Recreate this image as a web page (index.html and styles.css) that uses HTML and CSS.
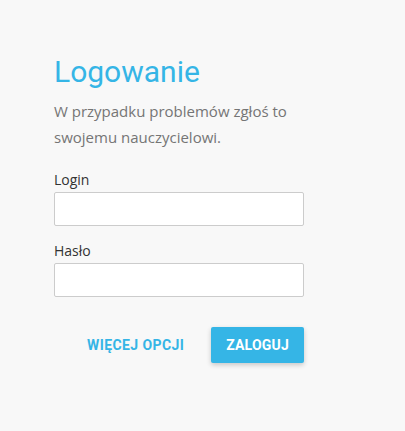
FILE: index.html
```html
<!DOCTYPE html>
<html lang="pl">
<head>
    <meta charset="UTF-8">
    <meta name="viewport" content="width=device-width, initial-scale=1.0">
    <title>Logowanie</title>
    <link rel="stylesheet" href="styles.css">
</head>
<body>
    <div class="login-box">
        <h1 class="title">Logowanie</h1>
        <p class="info">W przypadku problemów zgłoś to swojemu nauczycielowi.</p>
        <form class="login-form">
            <div class="field">
                <label for="login">Login</label>
                <input type="text" id="login">
            </div>
            <div class="field">
                <label for="haslo">Hasło</label>
                <input type="password" id="haslo">
            </div>
            <div class="actions">
                <button type="button" class="btn btn-flat">Więcej opcji</button>
                <button type="submit" class="btn btn-raised">Zaloguj</button>
            </div>
        </form>
    </div>
</body>
</html>
```

FILE: styles.css
```css
body {
    margin: 0;
    background-color: #f8f8f8;
    font-family: 'Open Sans', sans-serif;
    height: 431px;
}
.login-box {
    width: 250px;
    padding: 52px 0 0 54px;
}
.title {
    font-family: Roboto, sans-serif;
    font-weight: 400;
    font-size: 30px;
    line-height: 40px;
    color: #35b5e6;
    margin: 0;
}
.info {
    font-size: 15px;
    line-height: 26px;
    color: #757575;
    margin: 6px 0 0 0;
}
.login-form {
    margin-top: 20px;
}
.field {
    margin-bottom: 15px;
}
label {
    display: block;
    font-size: 14px;
    line-height: 20px;
    color: #333;
    margin-bottom: 2px;
}
input {
    display: block;
    box-sizing: border-box;
    width: 250px;
    height: 34px;
    border: 1px solid #cccccc;
    border-radius: 2px;
    background-color: #fff;
    padding: 6px 10px;
}
.actions {
    display: flex;
    justify-content: flex-end;
    align-items: center;
    gap: 11px;
    margin-top: 30px;
}
.btn {
    font-family: Roboto, sans-serif;
    font-weight: 700;
    font-size: 14px;
    text-transform: uppercase;
    border: none;
    border-radius: 2px;
    height: 36px;
    cursor: pointer;
}
.btn-flat {
    background-color: transparent;
    color: #35b5e6;
    letter-spacing: 0.4px;
    padding: 0 16px;
}
.btn-raised {
    background-color: #35b5e6;
    color: #fff;
    letter-spacing: 0.2px;
    padding: 0 15px;
    box-shadow: 0 2px 5px rgba(0, 0, 0, 0.2);
}
```
